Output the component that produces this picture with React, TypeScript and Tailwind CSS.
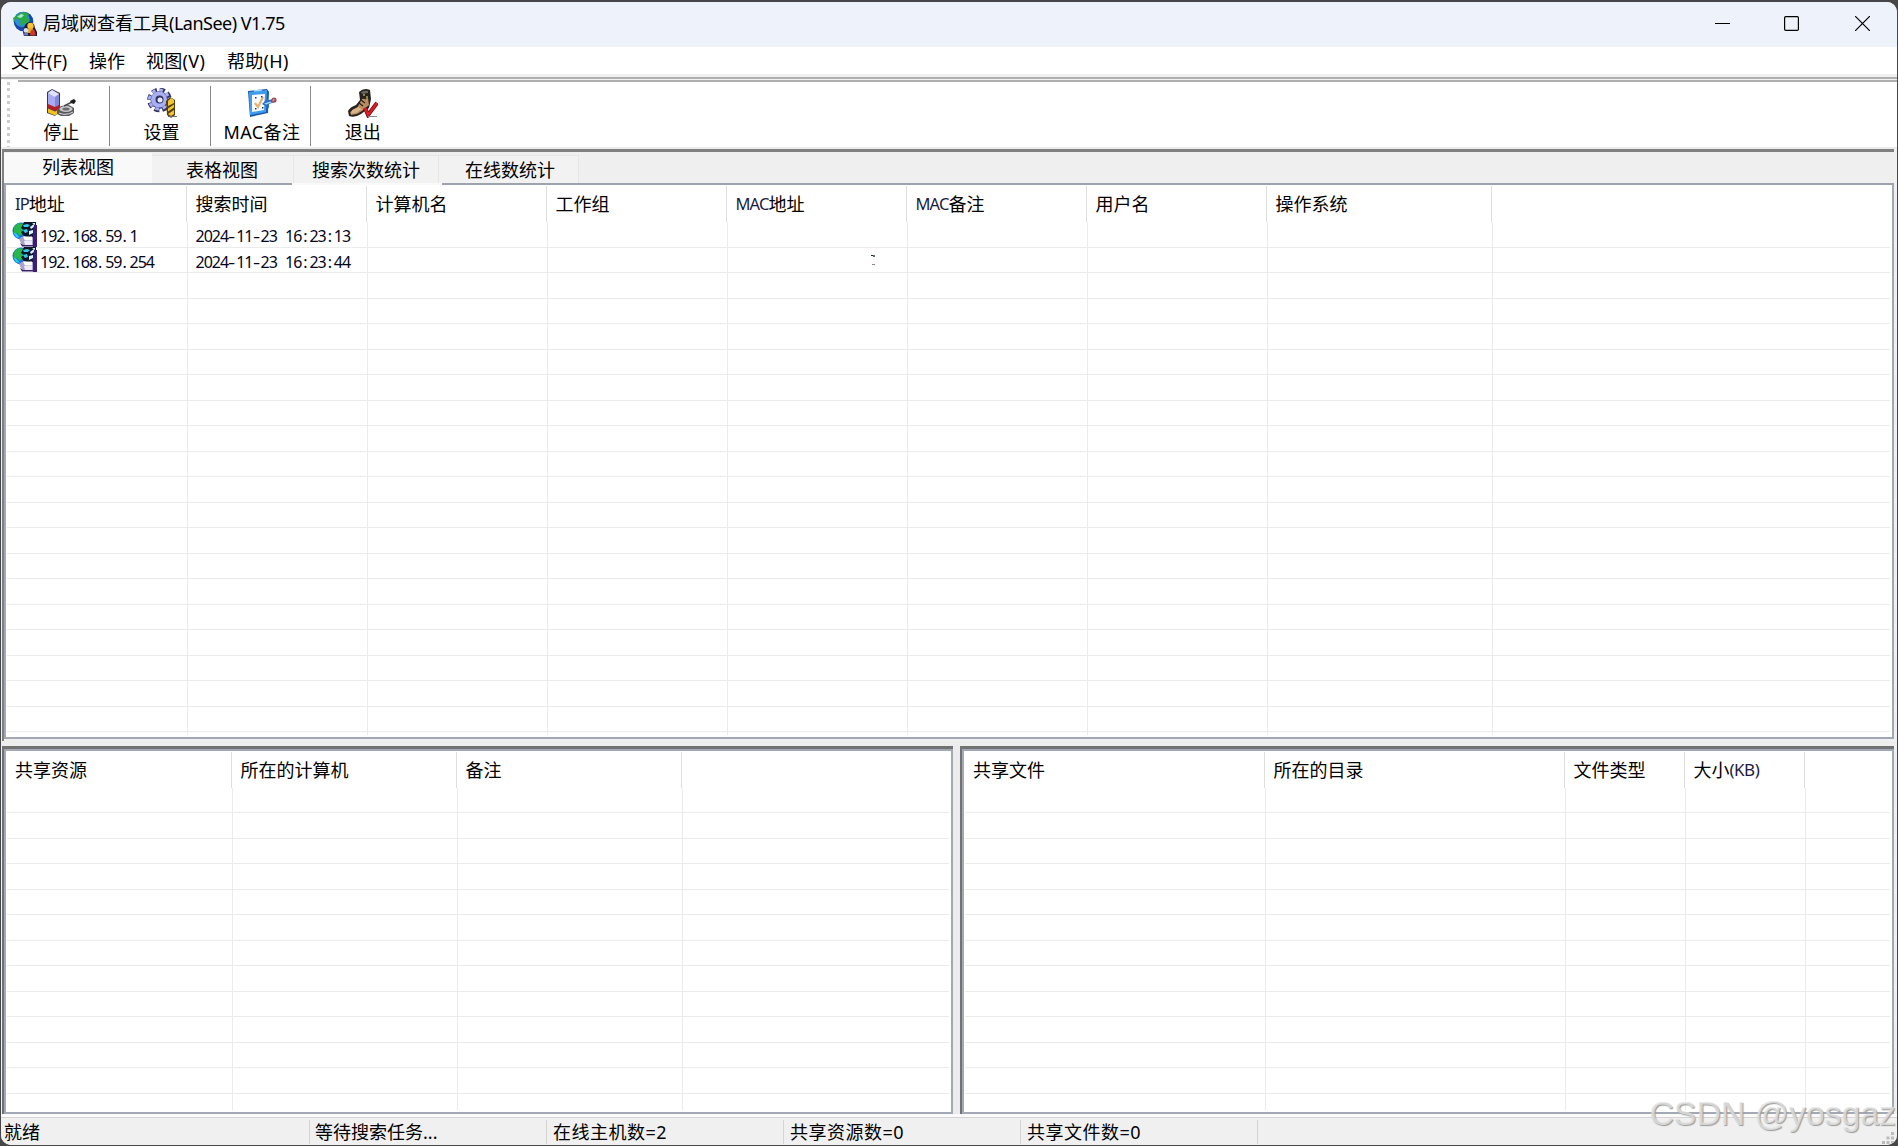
import React from 'react';
import { clsx } from 'clsx';

type Column = { label: string; width: string };

const hostColumns: Column[] = [
  { label: 'IP地址', width: 'w-[181px]' },
  { label: '搜索时间', width: 'w-[180px]' },
  { label: '计算机名', width: 'w-[180px]' },
  { label: '工作组', width: 'w-[180px]' },
  { label: 'MAC地址', width: 'w-[180px]' },
  { label: 'MAC备注', width: 'w-[180px]' },
  { label: '用户名', width: 'w-[180px]' },
  { label: '操作系统', width: 'w-[225px]' },
];

const shareColumns: Column[] = [
  { label: '共享资源', width: 'w-[226px]' },
  { label: '所在的计算机', width: 'w-[225px]' },
  { label: '备注', width: 'w-[225px]' },
];

const fileColumns: Column[] = [
  { label: '共享文件', width: 'w-[301px]' },
  { label: '所在的目录', width: 'w-[300px]' },
  { label: '文件类型', width: 'w-[120px]' },
  { label: '大小(KB)', width: 'w-[120px]' },
];

const hosts = [
  { ip: '192.168.59.1', time: '2024-11-23 16:23:13' },
  { ip: '192.168.59.254', time: '2024-11-23 16:23:44' },
];

const GlobeIcon = () => (
  <svg viewBox="0 0 24 26" className="w-6 h-[26px] shrink-0">
    <circle cx="10.500" cy="10.500" r="9.800" fill="#1747a8" />
    <circle cx="9" cy="8.500" r="7.600" fill="#2f8be6" />
    <path d="M3 5 7 2l4-1 5 2-2 3 3 3-3 4-4-1-1 4-3-3 1-4-4-1-2 3-1-4z" fill="#2aa84a" />
    <path d="M4 6 8 3l3 1-3 3z" fill="#a8ecc8" />
    <path d="M12 14l2-2 3-1 4 2 1 4 2 4v4H11l-1-4z" fill="#1b1b26" />
    <circle cx="17.500" cy="15" r="3.200" fill="#f6c13c" />
    <path d="M14 22q0-5 3.500-5t3.500 5z" fill="#e8a51f" />
    <circle cx="13" cy="19.500" r="2.400" fill="#cfe0f5" />
    <path d="M10.500 24.500q1-4 4-3l1 3z" fill="#6a78c8" />
    <path d="M17 24.500q0-6 2.800-6t2.800 6z" fill="#c83a2c" />
  </svg>
);

const HostIcon = () => (
  <svg viewBox="0 0 25 25" className="w-[25px] h-[25px] shrink-0">
    <circle cx="9" cy="9" r="8.500" fill="#1b6fd8" />
    <path d="M2 5 6 1l6 1-2 5 2 3-4 4-3-3-3 1z" fill="#28b64c" />
    <path d="M1 10l4 2 3 4-4-1z" fill="#1fd0e8" />
    <path d="M12 0h12v14l-3 2h-7l-3-3-2-3 3-2-3-2z" fill="#0b1526" />
    <path d="M11 3l4-1 3 1-2 2h-4zM11 8l4-1 1 3-3 1z" fill="#35c7ee" />
    <path d="M18 5l4-3v3l-3 2zM17 9l4-1v3l-4 2zM20 1h3v2z" fill="#d9f4ff" />
    <path d="M22 3h3v22h-4l-1-6z" fill="#3a1c7a" />
    <path d="M7 17q4-4 8-2h6v8H10z" fill="#a9a4cc" />
    <path d="M11 14.500h9v4h-7z" fill="#fff" />
    <path d="M8 21l3 2h12v1.500H10z" fill="#3b2466" />
    <path d="M12 19h8v4h-7z" fill="#eeeaf8" />
  </svg>
);

const StopIcon = () => (
  <svg viewBox="0 0 30 30" className="w-[30px] h-[30px]">
    <path d="M1 4 6 1l8 4v18l-5 5-8-3z" fill="#3a3a52" />
    <path d="M2 5l4-3 7 4v12l-4 2-7-3z" fill="#a9abf2" />
    <path d="M2 5l4-3 7 4-4 3z" fill="#e2e3ff" />
    <path d="M9 9l4-3v12l-4 2z" fill="#8486d8" />
    <path d="M2 16l7 3 4-2v4l-4 2-7-3z" fill="#b3202a" />
    <path d="M2 20.500l7 3 4-2v3l-4 3-7-3z" fill="#f2c21d" />
    <path d="M11 22l4-4 8-1 5 3v5l-5 3h-8l-4-2z" fill="#59595d" />
    <ellipse cx="20" cy="21" rx="6.500" ry="3" fill="#c9c9cc" />
    <ellipse cx="20" cy="21" rx="3.500" ry="1.500" fill="#6b6b70" />
    <path d="M13 25q7 3 14-1" fill="none" stroke="#c9c9cd" strokeWidth="1.300" />
    <path d="M18 18l8-4" stroke="#4a4a4e" strokeWidth="1.500" />
    <path d="M24 13l4-2 2 2-2 3-3-1z" fill="#1c1c1e" />
  </svg>
);

const SettingsIcon = () => (
  <svg viewBox="0 0 30 30" className="w-[30px] h-[30px]">
    <circle cx="12.500" cy="12" r="10" fill="none" stroke="#33365e" strokeWidth="4.600" strokeDasharray="5 2.850" />
    <circle cx="12.500" cy="12" r="9" fill="#4a4d86" />
    <circle cx="12" cy="11.500" r="8" fill="#a9aff5" />
    <circle cx="12" cy="11.500" r="9.600" fill="none" stroke="#a9aff5" strokeWidth="2.800" strokeDasharray="3.600 3.940" />
    <circle cx="12.500" cy="11.500" r="4" fill="#32355c" />
    <circle cx="13" cy="12" r="2.500" fill="#e5e8ff" />
    <path d="M19 13l4-4 5 3v15l-4 3-4-3z" fill="#54400d" />
    <path d="M21 13l3-3 3 2v3l-6 3zM21 20.500l6-4v3l-6 4zM21 26l6-4v4l-3 2z" fill="#f3c53a" />
    <path d="M21 28.500h9" fill="none" stroke="#6a6a6a" />
  </svg>
);

const NoteIcon = () => (
  <svg viewBox="0 0 30 30" className="w-[30px] h-[30px]">
    <path d="M1 3 20 1l2 3-1 21L3 29z" fill="#1c5aa8" />
    <path d="M2 4l18-2-1 22L3 27z" fill="#3f9df0" />
    <path d="M5 7l13-1-1 16-12 2z" fill="#f7fbff" />
    <path d="M7 3l8-1" stroke="#9fd8ff" strokeWidth="1.500" />
    <path d="M8 15l3 4 5-10" fill="none" stroke="#e8b06a" strokeWidth="2.200" />
    <path d="M8 9h1.500v1.500H8zM14 8h1.500v1.500H14zM8 20h1.500v1.500H8zM15 19h1.500v1.500H15z" fill="#1d3a66" />
    <path d="M15 16l6-6v2l7-1v3l-6 2v4z" fill="#2a6fc0" />
    <path d="M17 15.500l6-2 2 1-6 2z" fill="#9ad2fa" />
    <circle cx="27" cy="12" r="2.600" fill="#9c4a55" />
    <path d="M25.500 13l2-2" stroke="#e09aa0" strokeWidth="1.300" />
  </svg>
);

const ExitIcon = () => (
  <svg viewBox="0 0 30 30" className="w-[30px] h-[30px]">
    <path d="M11 4q5-5 11-2l1 9-2 9-8 6q-6 4-12 2l-1-5q2-4 8-6l4-5z" fill="#26221f" />
    <path d="M13 4q4-2 7-1v2l-6 1z" fill="#6a665e" />
    <path d="M14 11l6-1 1 7-7 6-5 3-6 1-1-3 7-4z" fill="#b98d61" />
    <path d="M4 22l6-3 4 2-6 4-5 1z" fill="#dcb48a" />
    <path d="M14 9l4 2M13 12l4 3M11 15l4 3" stroke="#2c2415" strokeWidth="1.200" />
    <path d="M15 6h2v2h-2zM18 8h2v2h-2z" fill="#8d8440" />
    <path d="M17 20l3 7 9-12" fill="none" stroke="#6b0d12" strokeWidth="4" />
    <path d="M17 20l3 7 9-12" fill="none" stroke="#dd1c24" strokeWidth="2.500" />
    <path d="M20 28.500h9" stroke="#8b8b8b" />
  </svg>
);

const tools = [
  { label: '停止', icon: <StopIcon /> },
  { label: '设置', icon: <SettingsIcon /> },
  { label: 'MAC备注', icon: <NoteIcon /> },
  { label: '退出', icon: <ExitIcon /> },
];

// Latin runs in the headers use a smaller face than the Chinese ones
const HeaderLabel = ({ text }: { text: string }) => (
  <>
    {text.split(/([A-Z()]+)/).filter(Boolean).map((part, i) =>
      /[A-Z]/.test(part) ? (
        <span key={i} className={clsx('text-[#1c1c3c]', part[0] === '(' ? 'text-[17px] tracking-[-0.5px]' : 'text-[16.500px] tracking-[-0.9px]')}>{part}</span>
      ) : (
        <span key={i}>{part}</span>
      )
    )}
  </>
);

// Digits and punctuation share one advance width
const FixedText = ({ text }: { text: string }) => (
  <span className="text-[16px] tracking-[-1px] whitespace-pre text-[#05051a]">
    {text.split(/([.:\- ])/).filter(Boolean).map((part, i) => {
      if (/\d/.test(part)) return part;
      return (
        <span
          key={i}
          className={clsx('inline-block w-[8.1px] tracking-normal', part === '-' && 'origin-left scale-x-140', part === ':' && 'pl-[2px]', part === '.' && 'pl-px')}
        >
          {part}
        </span>
      );
    })}
  </span>
);

const GridList = ({ columns, rows, headerClass, cells = [] }: {
  columns: Column[];
  rows: number;
  headerClass: string;
  cells?: React.ReactNode[][];
}) => (
  <div className="flex-1 min-w-0 flex flex-col bg-white overflow-hidden">
    <div className={clsx('flex shrink-0', headerClass)}>
      {columns.map((col, i) => (
        <div
          key={col.label}
          className={clsx('shrink-0 flex items-center border-r border-[#dedede] leading-none whitespace-nowrap', i === 0 ? 'pl-[9px]' : 'pl-[8.5px]', col.width)}
        >
          <HeaderLabel text={col.label} />
        </div>
      ))}
    </div>
    <div className="flex-1 flex flex-col ml-px mr-[2px] mb-[2px] overflow-hidden">
      {Array.from({ length: rows }).map((_, r) => (
        <div key={r} className="h-[25.5px] shrink-0 flex border-b border-[#ebebeb]">
          {columns.map((col, c) => (
            <div key={c} className={clsx('shrink-0 flex items-center border-r border-[#ebebeb] leading-none', col.width)}>
              {cells[r]?.[c]}
            </div>
          ))}
        </div>
      ))}
      <div className="flex-1 flex">
        {columns.map((col, c) => (
          <div key={c} className={clsx('shrink-0 border-r border-[#ebebeb]', col.width)} />
        ))}
      </div>
    </div>
  </div>
);

const App: React.FC = () => {
  const hostCells = hosts.map((h, i) => [
    <div className="flex items-center pl-[5px]">
      <HostIcon />
      <span className="ml-[3px] pt-[2px] tracking-normal"><FixedText text={h.ip} /></span>
    </div>,
    <span className="pl-[7.5px] pt-[2px]"><FixedText text={h.time} /></span>,
    null,
    null,
    i === 1 ? (
      <svg viewBox="0 0 5 12" className="w-[5px] h-3 ml-[143px]">
        <path d="M0 1h2v1H0z" fill="#222" />
        <path d="M2 1h2v2H2z" fill="#56718f" />
        <path d="M1 10h3v1H1z" fill="#888" />
      </svg>
    ) : null,
  ]);

  return (
    <div className="w-[1898px] h-[1146px] relative overflow-hidden bg-[#47474a] pt-[2px] pl-px text-[18px] text-black font-['Noto_Sans','Noto_Sans_CJK_SC',sans-serif]">
      <div className="w-[1896px] h-[1143px] rounded-[10px] overflow-hidden flex flex-col bg-[#f0f0f0]">
        {/* Title bar */}
        <div className="h-[45px] shrink-0 flex items-center bg-[#eef3fb] pb-[2px]">
          <div className="ml-3 flex items-center">
            <GlobeIcon />
            <span className="ml-[6px] leading-none pb-px">局域网查看工具<span className="tracking-[-0.5px]">(LanSee) V1.75</span></span>
          </div>
          <div className="ml-auto flex items-center">
            <svg viewBox="0 0 15 15" className="w-[15px] h-[15px] mr-[54px]"><path d="M0 7.500h15" stroke="#000" /></svg>
            <svg viewBox="0 0 15 15" className="w-[15px] h-[15px] mr-[56px]"><rect x="0.600" y="0.600" width="13.800" height="13.800" rx="1.200" fill="none" stroke="#000" strokeWidth="1.200" /></svg>
            <svg viewBox="0 0 15 15" className="w-[15px] h-[15px] mr-[27px]"><path d="M0 0l15 15M15 0 0 15" stroke="#000" strokeWidth="1.200" /></svg>
          </div>
        </div>

        {/* Menu */}
        <div className="h-[27px] shrink-0 flex items-center bg-white pl-[10px] leading-none">
          <span className="w-[78px]">文件(F)</span>
          <span className="w-[57px]">操作</span>
          <span className="w-[81px] tracking-[0.3px]">视图(V)</span>
          <span className="tracking-[0.3px]">帮助(H)</span>
        </div>
        <div className="h-[3px] shrink-0 bg-[#f0f0f0]" />
        <div className="h-[2px] shrink-0 bg-[#b0b0b0]" />
        <div className="h-px shrink-0 bg-[#f4f4f4]" />
        <div className="h-[2px] shrink-0 bg-white pl-[17px]"><div className="h-full bg-[#b0b0b0]" /></div>

        {/* Toolbar */}
        <div className="h-[65px] shrink-0 flex bg-white">
          <div className="w-[9px] flex flex-col items-end gap-[3.400px]">
            {Array.from({ length: 11 }).map((_, i) => (
              <span key={i} className="w-[3px] h-[3px] shrink-0 bg-[#cdcdcd]" />
            ))}
          </div>
          {tools.map((tool, i) => (
            <div key={tool.label} className={clsx('w-[100.4px] h-[60px] mt-1 flex flex-col items-center pt-[1.500px] pl-[3px]', i < 3 && 'border-r border-[#8c8c8c]')}>
              {tool.icon}
              <span className={clsx('leading-none mt-[5px]', i === 2 && 'tracking-[0.4px]')}>{tool.label}</span>
            </div>
          ))}
        </div>
        <div className="h-[2px] shrink-0 bg-[#ececec]" />

        {/* Host view */}
        <div className="h-[592px] shrink-0 flex flex-col bg-[#efefef] ml-px mr-[3px] border-t-[3px] border-l-2 border-[#808080]">
          <div className="h-[31px] shrink-0 flex items-end leading-none">
            <div className="w-[148px] h-[30px] bg-[#f9f9f9] flex items-center pl-[38px] pb-[2px]">列表视图</div>
            <div className="w-[142px] h-[28px] bg-[#f2f2f2] border-t border-r border-[#e6e6e6] flex items-center pl-[34px] pt-px">表格视图</div>
            <div className="w-[145px] h-[28px] bg-[#f2f2f2] border-t border-r border-[#e6e6e6] flex items-center pl-[18px] pt-px">搜索次数统计</div>
            <div className="w-[140px] h-[28px] bg-[#f2f2f2] border-t border-r border-[#e6e6e6] flex items-center pl-[26px] pt-px">在线数统计</div>
          </div>
          <div className="h-[2px] shrink-0 flex">
            <div className="w-[288px] bg-[#9da3ad]" />
            <div className="w-[150px] bg-[#fafafa]" />
            <div className="flex-1 bg-[#9da3ad]" />
          </div>
          <div className="flex-1 min-h-0 flex border-x-2 border-b-2 border-[#a3a9b4] mb-[2px]">
            <GridList columns={hostColumns} rows={20} headerClass="h-[37px] pt-px" cells={hostCells} />
          </div>
        </div>
        <div className="h-[5px] shrink-0 bg-[#ededed]" />

        {/* Shares and files */}
        <div className="h-[368px] shrink-0 flex pl-px pr-[3px]">
          <div className="w-[951px] flex border-t-[3px] border-l-2 border-[#727272]">
            <div className="flex-1 min-w-0 flex border-2 border-[#a3a9b4]">
              <GridList columns={shareColumns} rows={12} headerClass="h-[36.5px] pt-px" />
            </div>
          </div>
          <div className="w-[7px] bg-[#ececec]" />
          <div className="flex-1 min-w-0 flex border-t-[3px] border-l-2 border-[#727272]">
            <div className="flex-1 min-w-0 flex border-2 border-[#a3a9b4]">
              <GridList columns={fileColumns} rows={12} headerClass="h-[36.5px] pt-px" />
            </div>
          </div>
        </div>
        <div className="h-[3px] shrink-0 bg-[#fafafa]" />

        {/* Status bar */}
        <div className="flex-1 flex items-center border-t border-[#d6d3d6] bg-[#f0f0f0] leading-none">
          <div className="w-[309px] h-6 border-r border-[#d5d5d5] pl-[3px] flex items-center">就绪</div>
          <div className="w-[237px] h-6 border-r border-[#d5d5d5] pl-[5px] flex items-center">等待搜索任务...</div>
          <div className="w-[237px] h-6 border-r border-[#d5d5d5] pl-[6px] flex items-center tracking-[0.5px]">在线主机数=2</div>
          <div className="w-[237px] h-6 border-r border-[#d5d5d5] pl-[6px] flex items-center tracking-[0.5px]">共享资源数=0</div>
          <div className="w-[237px] h-6 border-r border-[#d5d5d5] pl-[6px] flex items-center tracking-[0.5px]">共享文件数=0</div>
          <svg viewBox="0 0 12 12" className="w-3 h-3 ml-auto mr-[3px] mt-3">
            <path d="M9 0h3v3H9zM4.500 4.500h3v3h-3zM9 4.500h3v3H9zM0 9h3v3H0zM4.500 9h3v3h-3zM9 9h3v3H9z" fill="#bcbcbc" />
          </svg>
        </div>
      </div>
      <div className="absolute right-[2px] bottom-[15px] text-[33.800px] leading-none whitespace-nowrap font-['Liberation_Sans',sans-serif] text-[#e4e4e4]/80 [text-shadow:1px_1px_1px_#9a9a9a]">
        CSDN @yosgaz
      </div>
    </div>
  );
};

export default App;
